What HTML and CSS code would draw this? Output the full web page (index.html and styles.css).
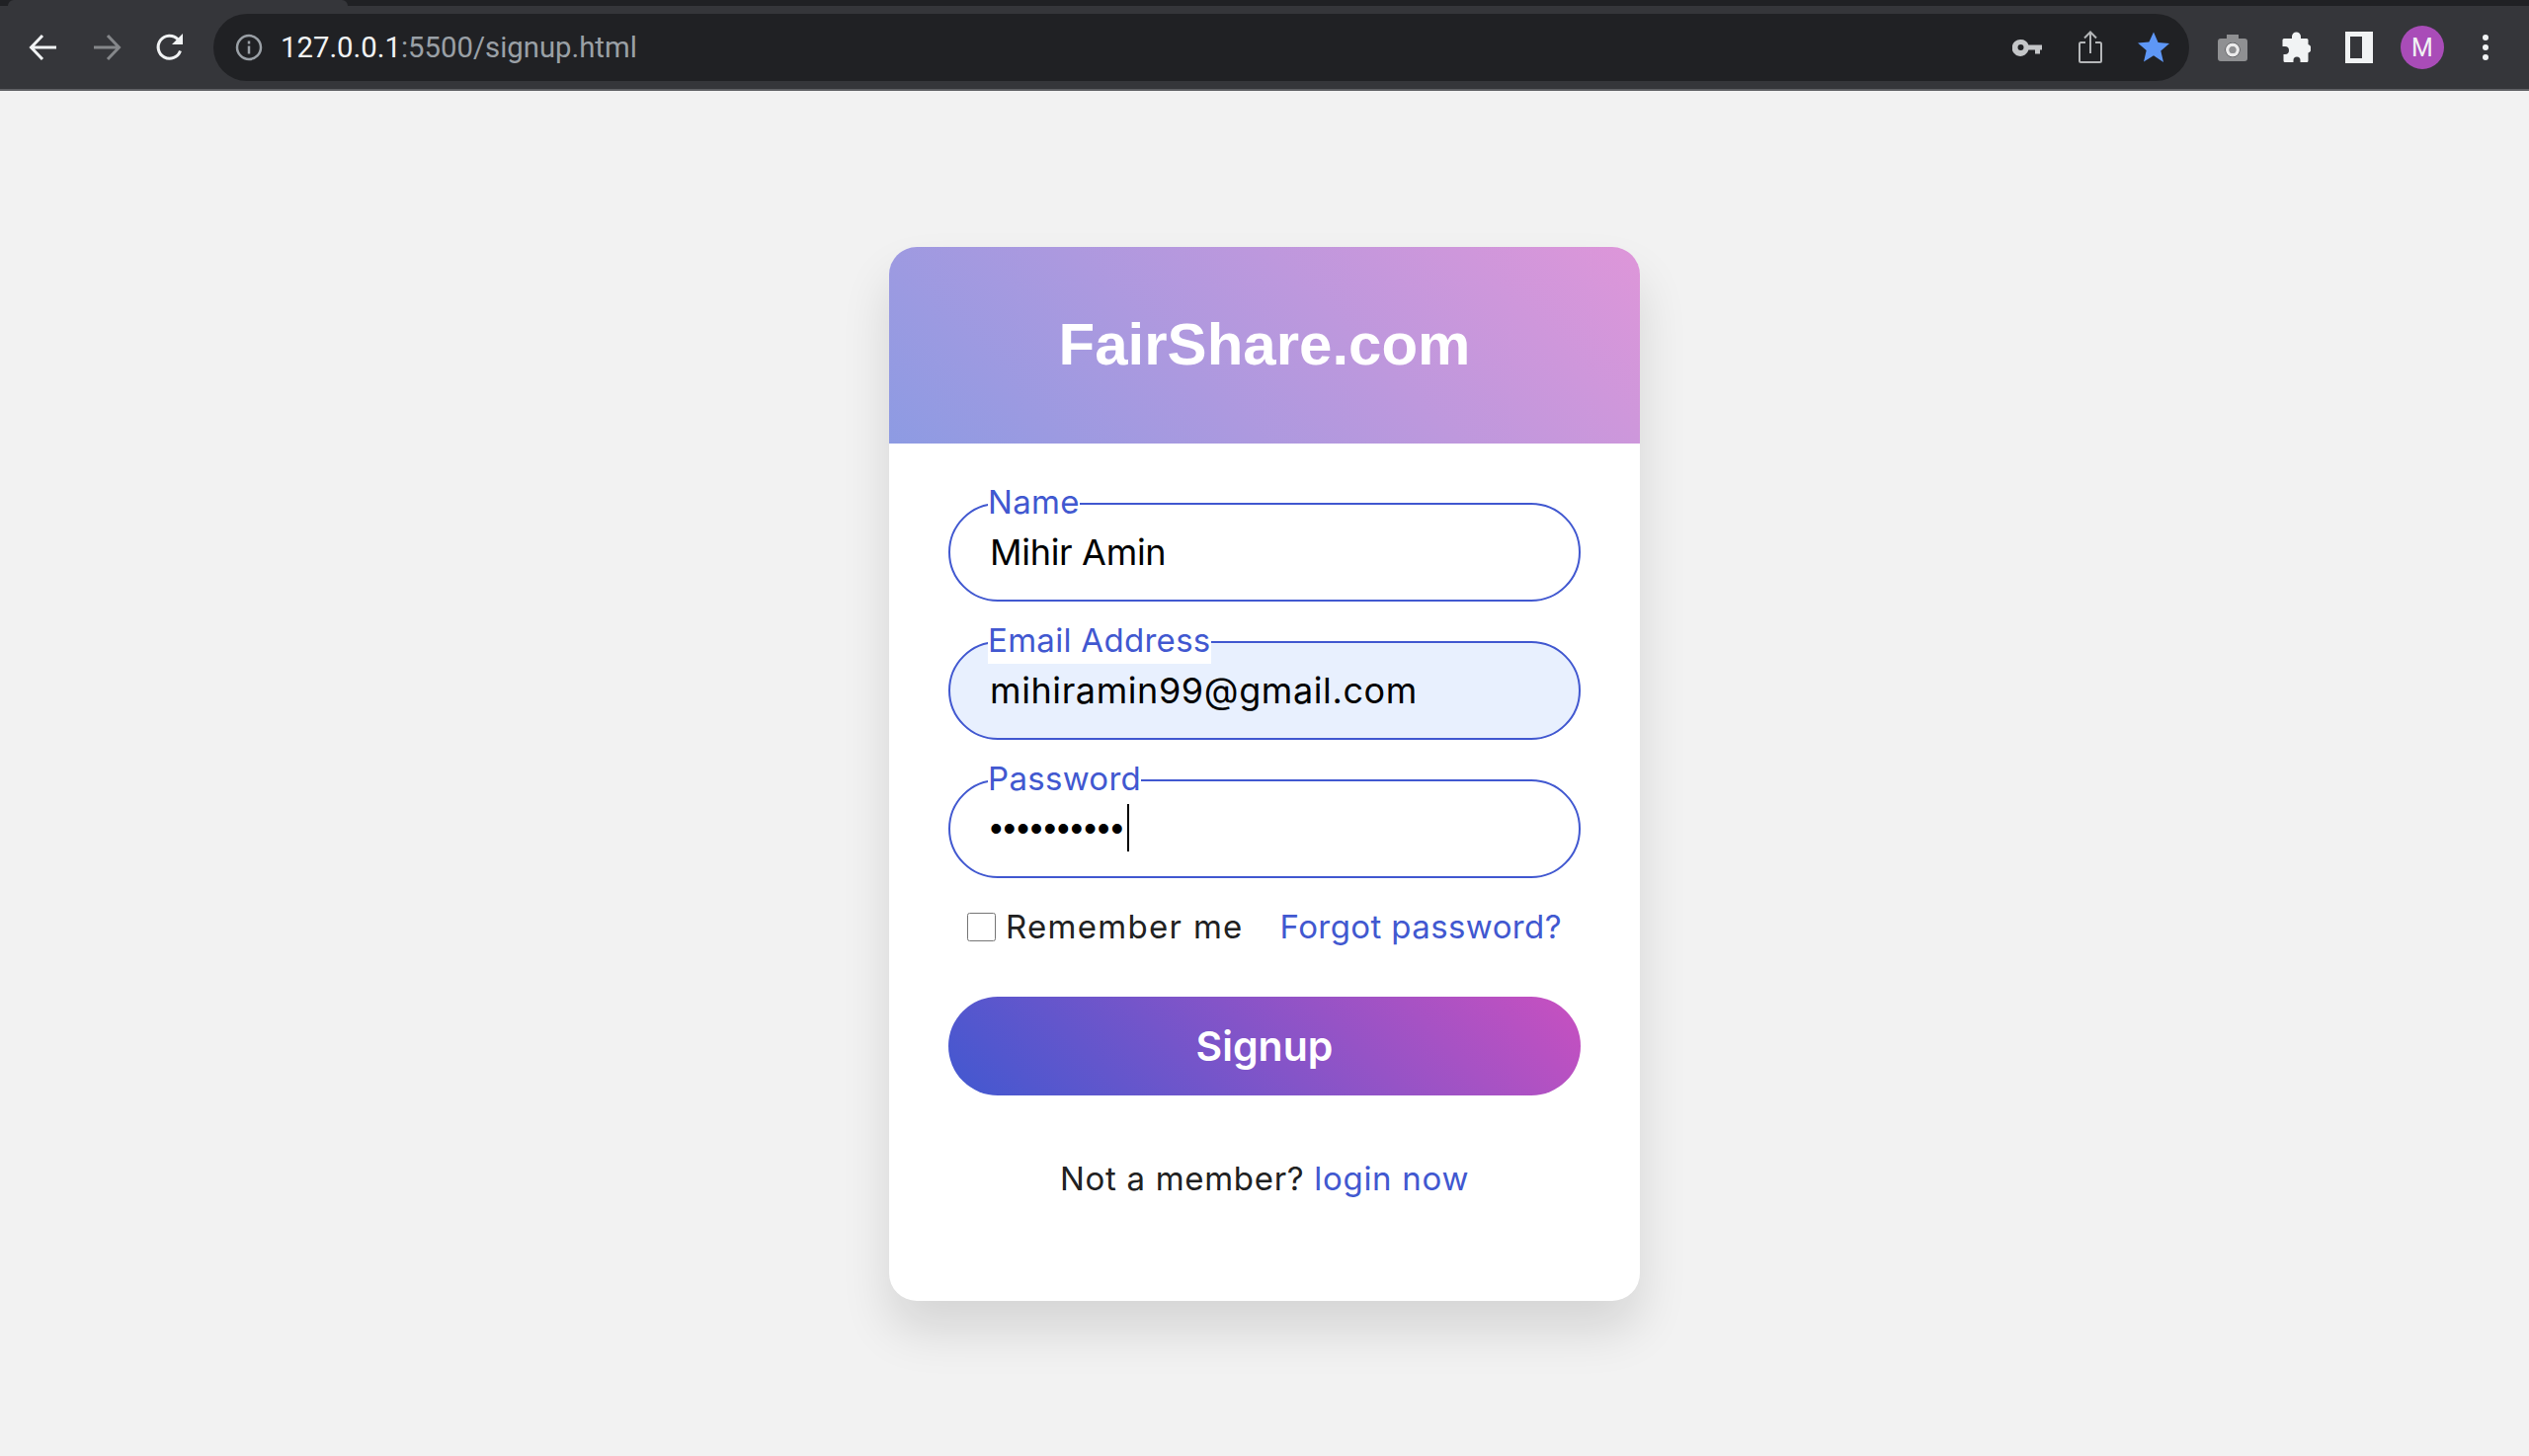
FILE: index.html
```html
<!DOCTYPE html>
<html lang="en">
<head>
    <meta charset="UTF-8">
    <meta name="viewport" content="width=device-width, initial-scale=1.0">
    <title>Signup</title>
    <link rel="stylesheet" href="styles.css">
</head>
<body>
    <!-- browser chrome -->
    <div class="tab-strip"><div class="tab-active"></div></div>
    <div class="toolbar">
        <div class="nav-btn">
            <svg width="32" height="32" viewBox="0 0 32 32" fill="none" stroke="#f1f3f4" stroke-width="3"><path d="M29 16H4M15 4 3.5 16 15 28"/></svg>
        </div>
        <div class="nav-btn">
            <svg width="32" height="32" viewBox="0 0 32 32" fill="none" stroke="#85878a" stroke-width="3"><path d="M3 16h25M17 4l11.5 12L17 28"/></svg>
        </div>
        <div class="nav-btn">
            <svg width="32" height="32" viewBox="0 0 32 32" fill="none"><path d="M26.5 19.5A11.5 11.5 0 1 1 24 7.8" stroke="#f1f3f4" stroke-width="3"/><path d="M18 13h11V2z" fill="#f1f3f4"/></svg>
        </div>
        <div class="omnibox">
            <svg class="info-icon" width="28" height="28" viewBox="0 0 28 28" fill="none"><circle cx="14" cy="14" r="12" stroke="#9aa0a6" stroke-width="2.5"/><path d="M14 12.5v8M14 7.5v3" stroke="#9aa0a6" stroke-width="2.5"/></svg>
            <span class="url"><span class="url-host">127.0.0.1</span>:5500/signup.html</span>
            <div class="omni-actions">
                <svg width="32" height="32" viewBox="0 0 32 32"><path fill-rule="evenodd" fill="#c4c6c8" d="M8.5 8a8.500 8.500 0 0 1 7.900 5.500H30v5h-2v4h-5v-4h-6.600A8.500 8.500 0 1 1 8.500 8zm0 5a3 3 0 1 0 0 6 3 3 0 0 0 0-6z"/></svg>
                <svg width="32" height="36" viewBox="0 0 32 36" fill="none" stroke="#b4b6b8" stroke-width="2"><path d="M11 13H6.500A1.500 1.500 0 0 0 5 14.500v17A1.500 1.500 0 0 0 6.500 33h19a1.500 1.500 0 0 0 1.500-1.500v-17a1.500 1.500 0 0 0-1.500-1.500H21M16 24V3M10 8.500 16 2.500l6 6"/></svg>
                <svg width="32" height="32" viewBox="0 0 32 32"><path fill="#5e97f6" d="M16 .5l4.600 10.600 11.400 1-8.700 7.500 2.700 11.300L16 24.300 6 30.400l2.700-11.300L0 11.600l11.400-1z"/></svg>
            </div>
        </div>
        <div class="tool-btn">
            <svg width="30" height="30" viewBox="0 0 30 30"><path fill-rule="evenodd" fill="#8f9092" d="M9 2h12v4h6a3 3 0 0 1 3 3v17a3 3 0 0 1-3 3H3a3 3 0 0 1-3-3V9a3 3 0 0 1 3-3h6zm6 8a7.500 7.500 0 1 0 0 15 7.500 7.500 0 0 0 0-15zm0 4a3.500 3.500 0 1 1 0 7 3.500 3.500 0 0 1 0-7z"/><path fill="#fff" opacity=".9" fill-rule="evenodd" d="M15 10.500a7 7 0 1 0 0 14 7 7 0 0 0 0-14zm0 3.500a3.500 3.500 0 1 1 0 7 3.500 3.500 0 0 1 0-7z"/></svg>
        </div>
        <div class="tool-btn">
            <svg width="30" height="32" viewBox="0 0 30 32"><path fill="#f1f3f4" d="M11 7V5a4.500 4.500 0 0 1 9 0v2h6a1.500 1.500 0 0 1 1.500 1.500V13a4.500 4.500 0 0 1 0 8.500v8a1.500 1.500 0 0 1-1.500 1.500h-6.500v-2a3.500 3.500 0 0 0-7 0v2H4a1.500 1.500 0 0 1-1.500-1.500V23h1.500a4 4 0 0 0 0-8H1.500V8.500A1.500 1.500 0 0 1 3 7z"/></svg>
        </div>
        <div class="tool-btn">
            <div class="panel-icon"></div>
        </div>
        <div class="tool-btn">
            <div class="avatar">M</div>
        </div>
        <div class="tool-btn">
            <div class="menu-dots"><i></i><i></i><i></i></div>
        </div>
    </div>

    <main class="page">
        <div class="card">
            <div class="card-head">FairShare.com</div>
            <form class="card-form">
                <div class="field">
                    <label class="field-label" for="name">Name</label>
                    <input class="field-input" id="name" type="text" value="Mihir Amin">
                </div>
                <div class="field">
                    <label class="field-label" for="email">Email Address</label>
                    <input class="field-input field-autofill" id="email" type="text" value="mihiramin99@gmail.com">
                </div>
                <div class="field">
                    <label class="field-label" for="password">Password</label>
                    <input class="field-input field-secret" id="password" type="password" value="mihiramin9">
                    <span class="caret"></span>
                </div>
                <div class="options">
                    <label class="remember"><input class="check" type="checkbox">Remember me</label>
                    <a class="link" href="#">Forgot password?</a>
                </div>
                <button class="submit" type="button">Signup</button>
                <p class="signup-note">Not a member? <a class="link" href="#">login now</a></p>
            </form>
        </div>
    </main>
</body>
</html>
```

FILE: styles.css
```css
html, body {
    margin: 0;
    padding: 0;
}

body {
    height: 1474px;
    overflow: hidden;
    background-color: #f2f2f2;
    font-family: "Inter", "Liberation Sans", sans-serif;
}

/* browser chrome */
.tab-strip {
    height: 6px;
    background-color: #202124;
}

.tab-active {
    width: 344px;
    height: 6px;
    margin-left: 8px;
    background-color: #35363a;
    border-radius: 6px 6px 0 0;
}

.toolbar {
    display: flex;
    align-items: center;
    height: 84px;
    padding-left: 12px;
    background-color: #35363a;
    border-bottom: 2px solid #5f6064;
}

.nav-btn {
    display: flex;
    align-items: center;
    justify-content: center;
    width: 64px;
    height: 64px;
}

.omnibox {
    display: flex;
    align-items: center;
    width: 2000px;
    height: 68px;
    margin-left: 12px;
    padding: 0 22px;
    box-sizing: border-box;
    background-color: #202124;
    border-radius: 34px;
}

.info-icon {
    margin-right: 18px;
}

.url {
    font-family: "Roboto", "Liberation Sans", sans-serif;
    font-size: 29.3px;
    color: #9aa0a6;
}

.url-host {
    color: #f1f3f4;
}

.omni-actions {
    display: flex;
    align-items: center;
    gap: 32px;
    margin-left: auto;
    margin-right: -2px;
}

.omni-actions svg:first-child {
    margin-right: -1px;
}

.tool-btn {
    display: flex;
    align-items: center;
    justify-content: center;
    width: 64px;
    height: 64px;
}

.omnibox + .tool-btn {
    margin-left: 12px;
}

.panel-icon {
    box-sizing: border-box;
    width: 28px;
    height: 32px;
    background-color: #35363a;
    border: 5px solid #f1f3f4;
    border-right-width: 11px;
}

.avatar {
    display: flex;
    align-items: center;
    justify-content: center;
    width: 44px;
    height: 44px;
    background-color: #a94cb8;
    border-radius: 50%;
    font-family: "Roboto", sans-serif;
    font-size: 25px;
    color: #f1f3f4;
}

.menu-dots {
    display: flex;
    flex-direction: column;
    gap: 4px;
}

.menu-dots i {
    display: block;
    width: 6px;
    height: 6px;
    background-color: #f1f3f4;
    border-radius: 50%;
}

/* page */
.page {
    display: flex;
    justify-content: center;
    padding-top: 158px;
}

.card {
    width: 760px;
    height: 1067px;
    background-color: #fff;
    border-radius: 28px;
    box-shadow: 0 30px 50px rgba(0, 0, 0, 0.12);
}

.card-head {
    display: flex;
    align-items: center;
    justify-content: center;
    height: 197px;
    padding-bottom: 2px;
    background: linear-gradient(45deg, rgba(65, 88, 208, 0.6), rgba(200, 80, 192, 0.6));
    border-radius: 28px 28px 0 0;
    font-family: "Liberation Sans", sans-serif;
    font-size: 60px;
    font-weight: 700;
    color: #fff;
}

.card-form {
    padding: 60px 60px 0;
}

.field {
    position: relative;
    height: 100px;
    margin-bottom: 40px;
}

.field-input {
    display: block;
    box-sizing: border-box;
    width: 100%;
    height: 100%;
    padding: 0 40px;
    background-color: #fff;
    border: 2px solid #4158d0;
    border-radius: 50px;
    outline: none;
    font-family: inherit;
    font-size: 36px;
    letter-spacing: -0.3px;
    color: #000;
}

.field-autofill {
    background-color: #e8f0fe;
    letter-spacing: 0.6px;
}

.field-secret {
    font-family: "Liberation Sans", sans-serif;
    letter-spacing: 1px;
}

.field-label {
    position: absolute;
    top: -23px;
    left: 40px;
    padding-bottom: 2px;
    background-color: #fff;
    font-size: 33px;
    line-height: 44px;
    letter-spacing: 0.3px;
    color: #4158d0;
}

.caret {
    position: absolute;
    top: 25px;
    left: 181px;
    width: 2px;
    height: 48px;
    background-color: #000;
}

.options {
    display: flex;
    align-items: center;
    justify-content: space-between;
    margin-top: -15px;
    padding: 0 19px;
    font-size: 33px;
    line-height: 48px;
    letter-spacing: 0.4px;
}

.remember {
    display: flex;
    align-items: center;
    letter-spacing: 1.3px;
    color: #212121;
}

.check {
    width: 29px;
    height: 29px;
    margin: 0 10px 0 0;
}

.link {
    color: #4158d0;
    text-decoration: none;
}

.submit {
    display: block;
    width: 100%;
    height: 100px;
    margin-top: 47px;
    border: none;
    border-radius: 50px;
    background: linear-gradient(45deg, #4158d0, #c850c0);
    font-family: inherit;
    font-size: 41px;
    font-weight: 600;
    color: #fff;
}

.signup-note {
    margin: 60px 0 0;
    font-size: 33px;
    line-height: 48px;
    letter-spacing: 0.7px;
    text-align: center;
    color: #212121;
}
```
